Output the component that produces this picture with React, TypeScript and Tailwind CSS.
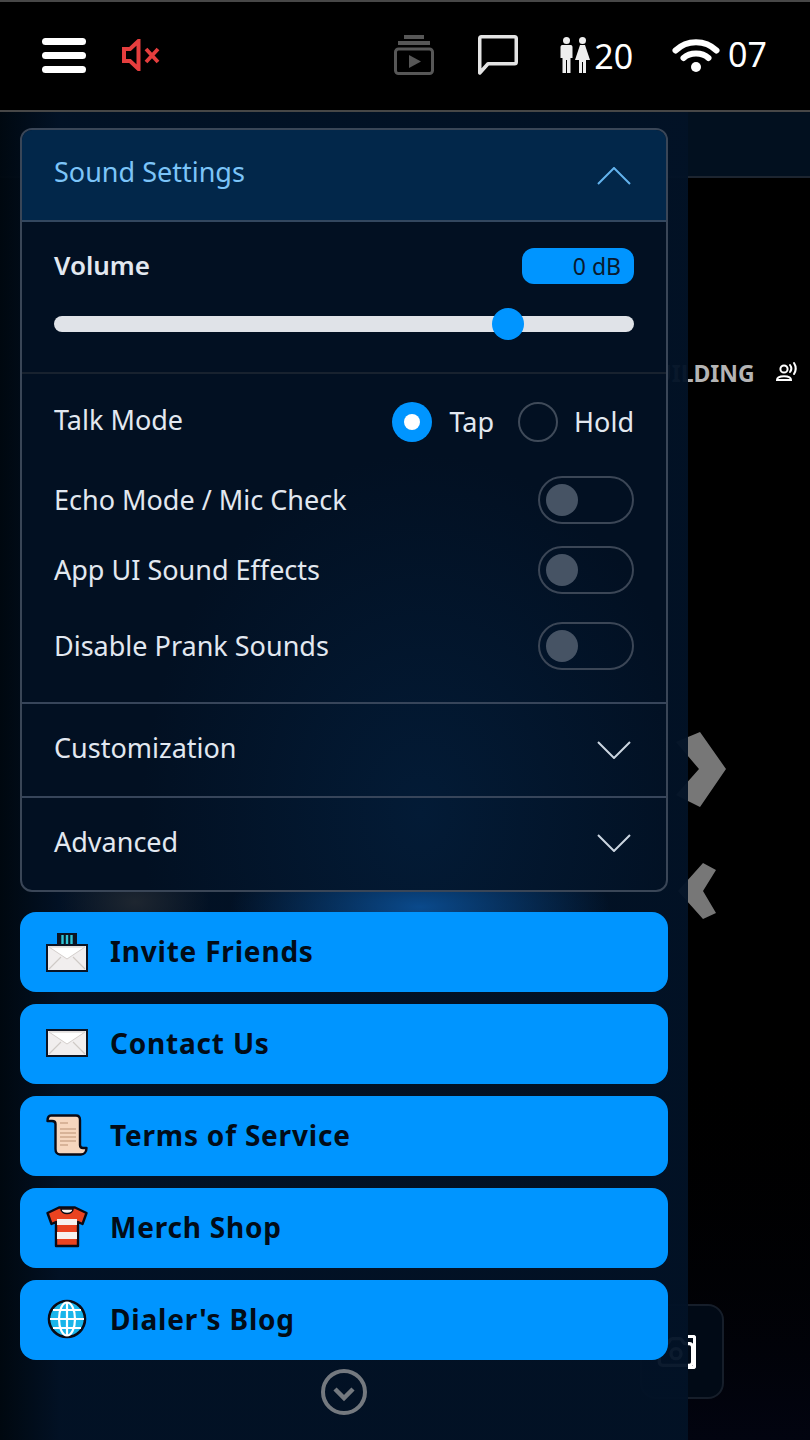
import { Camera } from "lucide-react";
import type { ReactNode } from "react";

function Chevron({ up, className }: { up?: boolean; className: string }) {
  return (
    <svg width="34" height="18" viewBox="0 0 34 18" fill="none" className={className}>
      <polyline
        points={up ? "1,17 17,1 33,17" : "1,1 17,17 33,1"}
        stroke="currentColor"
        strokeWidth="2"
      />
    </svg>
  );
}

function Toggle() {
  return (
    <div className="flex h-12 w-24 items-center rounded-full border-2 border-[#3b4656] pl-[6px]">
      <div className="h-8 w-8 rounded-full bg-[#465364]" />
    </div>
  );
}

function SettingRow({ label, toggleTop }: { label: string; toggleTop: string }) {
  return (
    <div className={`flex items-center justify-between ${toggleTop}`}>
      <span className="text-[27px] text-[#e2e8f0]">{label}</span>
      <Toggle />
    </div>
  );
}

function Envelope({ y }: { y: number }) {
  return (
    <g transform={`translate(0 ${y})`}>
      <rect x="1" y="1" width="40" height="26" fill="#f1eeee" stroke="#0b1424" strokeWidth="2" />
      <path d="M3 25 L15 13 M39 25 L27 13" stroke="#cfc9c6" strokeWidth="1.2" fill="none" />
      <path d="M3 3 L21 15 L39 3 Z" fill="#ffffff" stroke="#d4cfcc" strokeWidth="1" />
    </g>
  );
}

function InviteIcon() {
  return (
    <svg width="42" height="42" viewBox="0 0 42 42">
      <rect x="12" y="4" width="18" height="11" fill="#0b1424" stroke="#0b1424" strokeWidth="2" />
      <path d="M16.5 5v9 M21 5v9 M25.5 5v9" stroke="#2ec4d6" strokeWidth="2.4" />
      <Envelope y={14} />
    </svg>
  );
}

function ContactIcon() {
  return (
    <svg width="42" height="42" viewBox="0 0 42 42">
      <Envelope y={7} />
    </svg>
  );
}

function ScrollIcon() {
  return (
    <svg width="42" height="42" viewBox="0 0 42 42">
      <path
        d="M5 1.5 H30 C33 1.5 34 4 34 6 V31 C34 33 35 34 37 34 H40.5 C40.5 38 38 40.5 35 40.5 H14 C11 40.5 9.5 38 9.5 35 V10 C9.5 8 8.5 7 6 7 H1.5 C1.5 4 2.5 1.5 5 1.5 Z"
        fill="#f6d6be"
        stroke="#0a0a14"
        strokeWidth="2.4"
        strokeLinejoin="round"
      />
      <path
        d="M14 9 H22 M14 15 H30 M14 19 H30 M14 23 H30 M14 27 H30 M14 31 H22"
        stroke="#b98f73"
        strokeWidth="1.2"
      />
    </svg>
  );
}

function ShirtIcon() {
  return (
    <svg width="42" height="42" viewBox="0 0 42 42">
      <path
        d="M13 1.5 H29 L40.5 7 L36.5 18 L32 16 V40 H10 V16 L5.5 18 L1.5 7 Z"
        fill="#ea4320"
        stroke="#0a0a14"
        strokeWidth="2.4"
        strokeLinejoin="round"
      />
      <path d="M11 13 H31 V19 H11 Z M11 26 H31 V33 H11 Z" fill="#f6f1ee" />
      <path d="M15 3 C15 9 27 9 27 3 Z" fill="#f6f1ee" stroke="#0a0a14" strokeWidth="1.5" />
    </svg>
  );
}

function GlobeIcon() {
  return (
    <svg width="42" height="42" viewBox="0 0 42 42" fill="none">
      <circle cx="21" cy="21" r="18" fill="#19b5ea" stroke="#0a0a14" strokeWidth="2.6" />
      <ellipse cx="21" cy="21" rx="8" ry="16.5" stroke="#ffffff" strokeWidth="2.2" />
      <path d="M21 4 V38 M4 21 H38 M7 12 H35 M7 30 H35" stroke="#ffffff" strokeWidth="2.2" />
    </svg>
  );
}

const links: { label: string; icon: ReactNode }[] = [
  { label: "Invite Friends", icon: <InviteIcon /> },
  { label: "Contact Us", icon: <ContactIcon /> },
  { label: "Terms of Service", icon: <ScrollIcon /> },
  { label: "Merch Shop", icon: <ShirtIcon /> },
  { label: "Dialer's Blog", icon: <GlobeIcon /> },
];

function Header() {
  return (
    <header className="flex h-[112px] items-center border-y-2 border-[#474747] bg-black pb-[2px] pl-[42px] pr-[43px]">
      <div className="flex w-11 flex-col gap-[7px]">
        <div className="h-[7px] rounded-full bg-white" />
        <div className="h-[7px] rounded-full bg-white" />
        <div className="h-[7px] rounded-full bg-white" />
      </div>
      <svg width="38" height="32" viewBox="0 0 38 32" fill="none" className="ml-9" stroke="#e53e3e">
        <path d="M2 10 H8 L16.5 2 V30 L8 22 H2 Z" strokeWidth="4" />
        <path d="M24 10 L36 23 M36 10 L24 23" strokeWidth="3.8" />
      </svg>

      <svg width="40" height="40" viewBox="0 0 40 40" className="ml-auto" fill="#575757">
        <rect x="10" y="0" width="20" height="4" />
        <rect x="4" y="6" width="32" height="4" />
        <rect x="1.5" y="14" width="37" height="24.5" rx="3" fill="none" stroke="#575757" strokeWidth="3" />
        <path d="M15 20 L27 26.5 L15 33 Z" />
      </svg>
      <svg width="40" height="40" viewBox="0 0 40 40" fill="none" className="ml-11">
        <path
          d="M1.75 38 V3.5 C1.75 2.5 2.5 1.75 3.5 1.75 H36.5 C37.5 1.75 38.25 2.5 38.25 3.5 V27 C38.25 28 37.5 28.75 36.5 28.75 H10 Z"
          stroke="#e4e4e4"
          strokeWidth="3.5"
          strokeLinejoin="round"
        />
      </svg>
      <svg width="30" height="36" viewBox="0 0 30 36" fill="#eeeeee" className="ml-[42px]">
        <circle cx="6.5" cy="3.5" r="3.5" />
        <path d="M0.5 10 C0.5 8.3 2 8 3 8 H10 C11 8 12.5 8.3 12.5 10 V21 H10.5 V36 H7 V23 H6 V36 H2.5 V21 H0.5 Z" />
        <circle cx="22.5" cy="3.5" r="3.5" />
        <path d="M20 8 H25 L30 23 H26 V36 H23 V25 H22 V36 H19 V23 H15 Z" />
      </svg>
      <span className="ml-1 mt-[2px] text-[34px] leading-none text-white">20</span>
      <svg width="48" height="34" viewBox="0 0 48 34" fill="none" stroke="#ffffff" strokeLinecap="round" className="ml-[39px]">
        <path d="M3.5 12.5 C15 1.5 33 1.5 44.5 12.5" strokeWidth="6" />
        <path d="M11.5 20 C18 14 30 14 36.5 20" strokeWidth="6" />
        <circle cx="24" cy="29" r="5" fill="#ffffff" stroke="none" />
      </svg>
      <span className="mb-[2px] ml-2 text-[34px] leading-none text-white">07</span>
    </header>
  );
}

function Backdrop() {
  return (
    <>
      <div className="absolute left-0 right-0 top-[112px] h-[66px] border-b-2 border-[#1d2530] bg-[#02101f]" />
      <div className="absolute bottom-0 left-[688px] right-0 top-[1000px] bg-gradient-to-b from-black to-[#020410]" />
      <div className="absolute left-[639px] top-[358px] flex items-center">
        <span className="text-[23px] font-bold leading-[30px] text-[#b4b4b4]">BUILDING</span>
      </div>
      <svg width="24" height="24" viewBox="0 0 24 24" fill="none" stroke="#ffffff" strokeWidth="2" className="absolute left-[775px] top-[360px]">
        <circle cx="9" cy="9" r="3.6" />
        <path d="M2 20 C2 15 16 15 16 20 Z" />
        <path d="M15 5 C16.5 7 16.5 10 15 12 M19 3 C21.5 7 21.5 10 19 14" strokeLinecap="round" />
      </svg>
      <svg width="60" height="200" viewBox="0 0 60 200" className="absolute left-[670px] top-[730px]">
        <polygon points="30,2 56,39 30,77 6,65 29,39 6,12" fill="#777777" />
        <polygon points="33,133 46,140 33,161 46,183 33,189 8,161" fill="#777777" />
      </svg>
      <div className="absolute left-[640px] top-[1304px] flex h-[95px] w-[84px] items-center justify-end rounded-2xl border-2 border-[#161e2a] bg-[#010a16] pr-[26px]">
        <Camera size={40} strokeWidth={2} className="mr-[-8px] text-white" />
        <div className="h-[34px] w-2 rounded-r-[3px] border-y-[3px] border-r-[3px] border-white" />
      </div>
    </>
  );
}

function SoundPanel() {
  return (
    <section className="rounded-xl border-2 border-[#3a4657] bg-[radial-gradient(ellipse_280px_360px_at_62%_90%,#031b36,#021022)]">
      <div className="flex h-[92px] items-center justify-between rounded-t-[10px] border-b-2 border-[#33475f] bg-[#02274a] pl-8 pr-[35px]">
        <span className="mb-[5px] text-[27px] text-[#7cc4f8]">Sound Settings</span>
        <Chevron up className="mt-[2px] text-[#63b3ed]" />
      </div>

      <div className="border-b-2 border-[#18222f] px-8 pb-10 pt-[26px]">
        <div className="flex h-9 items-center justify-between">
          <span className="mb-[2px] text-[26px] font-semibold text-[#e2e8f0]">Volume</span>
          <div className="flex h-9 w-28 items-center justify-end rounded-xl bg-[#0095ff] pr-[13px] text-[23px] text-[#0a1a2e]">
            0 dB
          </div>
        </div>
        <div className="relative mt-8 h-4 rounded-full bg-[#e0e3e8]">
          <div className="absolute left-[438px] top-[-8px] h-8 w-8 rounded-full bg-[#0095ff]" />
        </div>
      </div>

      <div className="border-b-2 border-[#37455a] px-8 pb-8 pt-7">
        <div className="flex h-10 items-center justify-between">
          <span className="mb-1 text-[27px] text-[#e2e8f0]">Talk Mode</span>
          <div className="flex items-center">
            <div className="flex h-10 w-10 items-center justify-center rounded-full bg-[#0095ff]">
              <div className="h-4 w-4 rounded-full bg-white" />
            </div>
            <span className="ml-[17px] text-[27px] text-[#e2e8f0]">Tap</span>
            <div className="ml-6 h-10 w-10 rounded-full border-2 border-[#3f4a59]" />
            <span className="ml-4 text-[27px] text-[#e2e8f0]">Hold</span>
          </div>
        </div>
        <SettingRow label="Echo Mode / Mic Check" toggleTop="mt-[34px]" />
        <SettingRow label="App UI Sound Effects" toggleTop="mt-[22px]" />
        <SettingRow label="Disable Prank Sounds" toggleTop="mt-[28px]" />
      </div>

      <div className="flex h-[94px] items-center justify-between border-b-2 border-[#37455a] pl-8 pr-[35px]">
        <span className="mb-1 text-[27px] text-[#e2e8f0]">Customization</span>
        <Chevron className="text-[#cbd5e0]" />
      </div>
      <div className="flex h-[92px] items-center justify-between pl-8 pr-[35px]">
        <span className="mb-1 text-[27px] text-[#e2e8f0]">Advanced</span>
        <Chevron className="mb-[2px] text-[#cbd5e0]" />
      </div>
    </section>
  );
}

export default function App() {
  return (
    <div className="relative h-[1440px] w-[810px] overflow-hidden bg-black [font-family:'Noto_Sans',sans-serif]">
      <Header />
      <Backdrop />

      <aside className="absolute bottom-0 left-0 top-[112px] flex w-[688px] flex-col bg-[linear-gradient(90deg,#000810f5,#021226f5_60px)] px-5 pt-4">
        <div className="absolute left-[230px] top-[730px] h-[130px] w-[380px] rounded-full bg-[radial-gradient(closest-side,#0a4a8c,transparent)]" />
        <div className="absolute left-[60px] top-[745px] h-[90px] w-[150px] rounded-full bg-[radial-gradient(closest-side,#1e2630,transparent)]" />
        <div className="relative">
          <SoundPanel />
          <nav className="mt-5 flex flex-col gap-3">
            {links.map((link) => (
              <a
                key={link.label}
                className="flex h-20 items-center gap-[22px] rounded-2xl bg-[#0095ff] pb-[2px] pl-[26px] text-[28px] font-bold tracking-[0.8px] text-[#020c18]"
              >
                {link.icon}
                {link.label}
              </a>
            ))}
          </nav>
          <div className="mt-[9px] flex justify-center">
            <svg width="46" height="46" viewBox="0 0 46 46" fill="none" stroke="#74797f">
              <circle cx="23" cy="23" r="21" strokeWidth="4" />
              <path d="M14 20 L23 29 L32 20" strokeWidth="4.5" />
            </svg>
          </div>
        </div>
      </aside>
    </div>
  );
}
